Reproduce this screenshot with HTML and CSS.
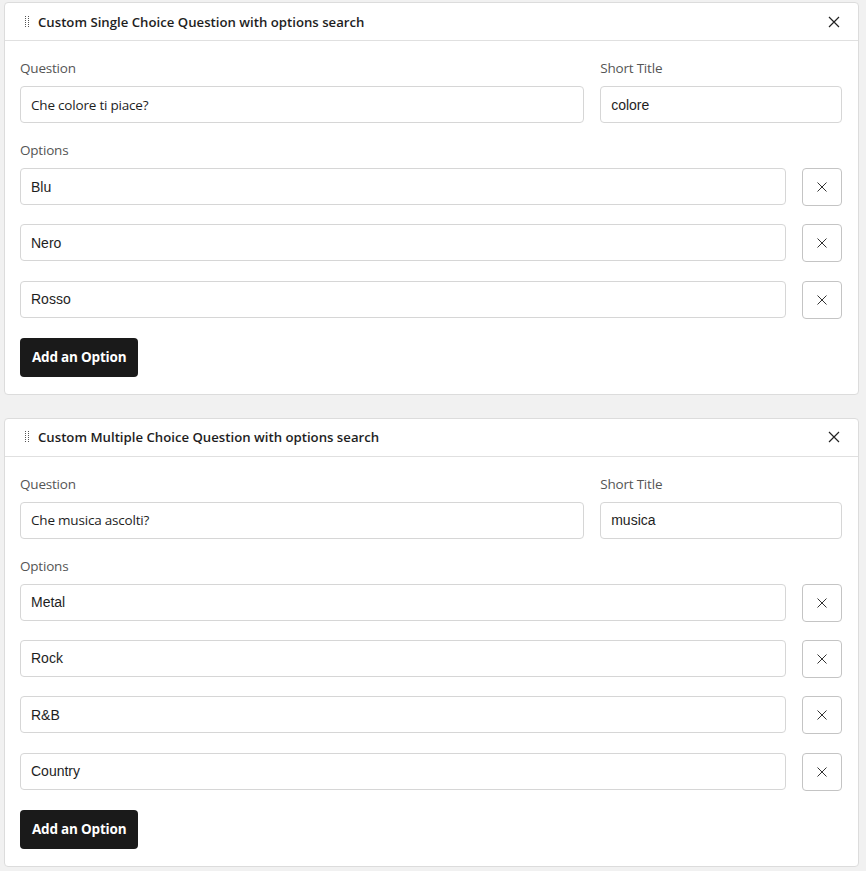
FILE: index.html
```html
<!DOCTYPE html>
<html>
<head>
<meta charset="utf-8">
<link rel="stylesheet" href="styles.css">
</head>
<body>
<div class="page">
  <section class="card">
    <header class="card-head">
      <svg class="drag" width="5" height="12" viewBox="0 0 5 12"><g fill="#555"><rect x="0" y="0" width="1" height="1"/><rect x="3" y="0" width="1" height="1"/><rect x="0" y="2" width="1" height="1"/><rect x="3" y="2" width="1" height="1"/><rect x="0" y="4" width="1" height="1"/><rect x="3" y="4" width="1" height="1"/><rect x="0" y="6" width="1" height="1"/><rect x="3" y="6" width="1" height="1"/><rect x="0" y="8" width="1" height="1"/><rect x="3" y="8" width="1" height="1"/><rect x="0" y="10" width="1" height="1"/><rect x="3" y="10" width="1" height="1"/></g></svg>
      <h2 class="card-title">Custom Single Choice Question with options search</h2>
      <button class="close"><svg width="12" height="12" viewBox="0 0 12 12"><path d="M1 1L11 11M11 1L1 11" stroke="#222" stroke-width="1.2"/></svg></button>
    </header>
    <div class="card-body">
      <div class="fields">
        <div class="field">
          <label class="label">Question</label>
          <div class="input ui">Che colore ti piace?</div>
        </div>
        <div class="field">
          <label class="label">Short Title</label>
          <div class="input arial">colore</div>
        </div>
      </div>
      <label class="label opt-label">Options</label>
      <div class="options">
        <div class="opt-row"><div class="input arial">Blu</div><button class="del"><svg width="12" height="12" viewBox="0 0 12 12"><path d="M1.5 1.5L10.5 10.5M10.5 1.5L1.5 10.5" stroke="#333" stroke-width="1"/></svg></button></div>
        <div class="opt-row"><div class="input arial">Nero</div><button class="del"><svg width="12" height="12" viewBox="0 0 12 12"><path d="M1.5 1.5L10.5 10.5M10.5 1.5L1.5 10.5" stroke="#333" stroke-width="1"/></svg></button></div>
        <div class="opt-row"><div class="input arial">Rosso</div><button class="del"><svg width="12" height="12" viewBox="0 0 12 12"><path d="M1.5 1.5L10.5 10.5M10.5 1.5L1.5 10.5" stroke="#333" stroke-width="1"/></svg></button></div>
      </div>
      <button class="add">Add an Option</button>
    </div>
  </section>

  <section class="card">
    <header class="card-head">
      <svg class="drag" width="5" height="12" viewBox="0 0 5 12"><g fill="#555"><rect x="0" y="0" width="1" height="1"/><rect x="3" y="0" width="1" height="1"/><rect x="0" y="2" width="1" height="1"/><rect x="3" y="2" width="1" height="1"/><rect x="0" y="4" width="1" height="1"/><rect x="3" y="4" width="1" height="1"/><rect x="0" y="6" width="1" height="1"/><rect x="3" y="6" width="1" height="1"/><rect x="0" y="8" width="1" height="1"/><rect x="3" y="8" width="1" height="1"/><rect x="0" y="10" width="1" height="1"/><rect x="3" y="10" width="1" height="1"/></g></svg>
      <h2 class="card-title">Custom Multiple Choice Question with options search</h2>
      <button class="close"><svg width="12" height="12" viewBox="0 0 12 12"><path d="M1 1L11 11M11 1L1 11" stroke="#222" stroke-width="1.2"/></svg></button>
    </header>
    <div class="card-body">
      <div class="fields">
        <div class="field">
          <label class="label">Question</label>
          <div class="input ui">Che musica ascolti?</div>
        </div>
        <div class="field">
          <label class="label">Short Title</label>
          <div class="input arial">musica</div>
        </div>
      </div>
      <label class="label opt-label">Options</label>
      <div class="options">
        <div class="opt-row"><div class="input arial">Metal</div><button class="del"><svg width="12" height="12" viewBox="0 0 12 12"><path d="M1.5 1.5L10.5 10.5M10.5 1.5L1.5 10.5" stroke="#333" stroke-width="1"/></svg></button></div>
        <div class="opt-row"><div class="input arial">Rock</div><button class="del"><svg width="12" height="12" viewBox="0 0 12 12"><path d="M1.5 1.5L10.5 10.5M10.5 1.5L1.5 10.5" stroke="#333" stroke-width="1"/></svg></button></div>
        <div class="opt-row"><div class="input arial">R&amp;B</div><button class="del"><svg width="12" height="12" viewBox="0 0 12 12"><path d="M1.5 1.5L10.5 10.5M10.5 1.5L1.5 10.5" stroke="#333" stroke-width="1"/></svg></button></div>
        <div class="opt-row"><div class="input arial">Country</div><button class="del"><svg width="12" height="12" viewBox="0 0 12 12"><path d="M1.5 1.5L10.5 10.5M10.5 1.5L1.5 10.5" stroke="#333" stroke-width="1"/></svg></button></div>
      </div>
      <button class="add">Add an Option</button>
    </div>
  </section>
</div>
</body>
</html>
```

FILE: styles.css
```css
* { box-sizing: border-box; }
html, body { margin: 0; padding: 0; }
body {
  background: #f1f1f1;
  font-family: "Open Sans", "Noto Sans", sans-serif;
  color: #1e1e1e;
}
.page {
  padding: 2px 7px 0 4px;
  display: flex;
  flex-direction: column;
  gap: 23px;
}
.card {
  background: #fff;
  border: 1px solid #dcdcdc;
  border-radius: 4px;
}
.card-head {
  height: 38px;
  border-bottom: 1px solid #e0e0e0;
  display: flex;
  align-items: center;
  padding: 0 18px 0 20px;
}
.drag { flex: none; margin-right: 8px; }
.card-title {
  flex: 1;
  margin: 0;
  font-size: 13.2px;
  font-weight: 600;
  letter-spacing: 0;
  color: #1e1e1e;
}
.close {
  border: 0;
  background: none;
  padding: 0;
  width: 12px;
  height: 12px;
  display: flex;
}
.card-body {
  padding: 17px 16px 17px 15px;
}
.fields {
  display: grid;
  grid-template-columns: 7fr 3fr;
  column-gap: 16px;
}
.field { display: flex; flex-direction: column; }
.label {
  display: block;
  font-size: 13.5px;
  line-height: 20px;
  color: #555;
  margin-bottom: 8px;
  letter-spacing: -0.2px;
}
.input {
  height: 37px;
  border: 1px solid #d6d6d6;
  border-radius: 4px;
  padding: 0 10px;
  display: flex;
  align-items: center;
  font-size: 14px;
  color: #1e1e1e;
}
.ui { font-family: "Open Sans", "Noto Sans", sans-serif; font-size: 13.5px; letter-spacing: -0.2px; }
.arial { font-family: "Liberation Sans", Arial, sans-serif; }
.opt-label { margin-top: 17px; }
.options {
  display: flex;
  flex-direction: column;
  gap: 18.33px;
}
.opt-row {
  display: flex;
  gap: 16px;
  align-items: flex-start;
}
.opt-row .input { flex: 1; }
.del {
  flex: none;
  width: 40px;
  height: 38px;
  border: 1px solid #c4c4c4;
  border-radius: 4px;
  background: #fff;
  display: flex;
  align-items: center;
  justify-content: center;
  padding: 0;
}
.add {
  display: block;
  margin-top: 19px;
  height: 39px;
  padding: 0 12px;
  background: #1a1a1a;
  color: #fff;
  border: 0;
  border-radius: 4px;
  font-family: "Open Sans", "Noto Sans", sans-serif;
  font-weight: 700;
  font-size: 13.5px;
  letter-spacing: -0.2px;
}
```
